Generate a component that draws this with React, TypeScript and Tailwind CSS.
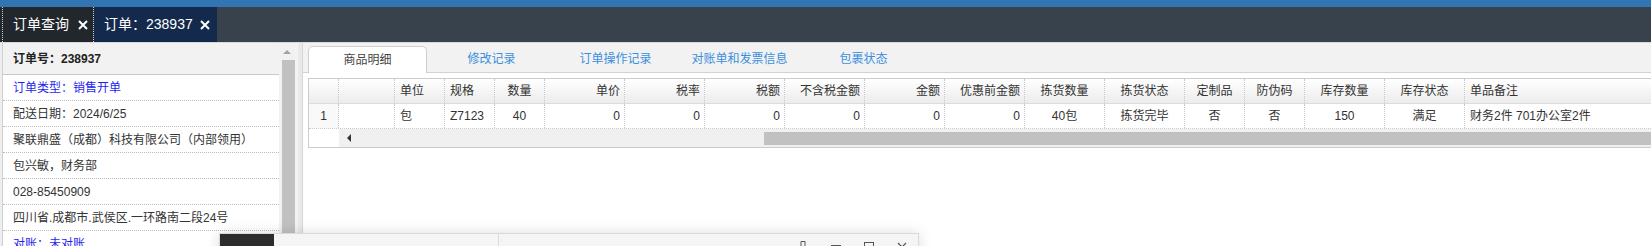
import React from "react";

const topTabs = [
  { label: "订单查询", w: "w-[92px]", bg: "bg-[#22272d]", gap: "gap-[9px]", dotted: true },
  { label: "订单：238937", w: "w-[123px]", bg: "bg-[#132a4c]", gap: "gap-[7px]", dotted: false },
];

const infoRows = [
  { text: "订单类型：销售开单", blue: true },
  { text: "配送日期：2024/6/25" },
  { text: "聚联鼎盛（成都）科技有限公司（内部领用）" },
  { text: "包兴敏，财务部" },
  { text: "028-85450909" },
  { text: "四川省.成都市.武侯区.一环路南二段24号" },
  { text: "对账：未对账", blue: true },
];

const subTabs = ["商品明细", "修改记录", "订单操作记录", "对账单和发票信息", "包裹状态"];

const L = "justify-start pl-[5px]";
const R = "justify-end pr-[4px]";
const C = "justify-center";

const columns = [
  { label: "", w: "w-[56px]", align: L, value: "" },
  { label: "单位", w: "w-[50px]", align: L, value: "包" },
  { label: "规格", w: "w-[50px]", align: L, value: "Z7123" },
  { label: "数量", w: "w-[50px]", align: C, value: "40" },
  { label: "单价", w: "w-[80px]", align: R, value: "0" },
  { label: "税率", w: "w-[80px]", align: R, value: "0" },
  { label: "税额", w: "w-[80px]", align: R, value: "0" },
  { label: "不含税金额", w: "w-[80px]", align: R, value: "0" },
  { label: "金额", w: "w-[80px]", align: R, value: "0" },
  { label: "优惠前金额", w: "w-[80px]", align: R, value: "0" },
  { label: "拣货数量", w: "w-[80px]", align: C, value: "40包" },
  { label: "拣货状态", w: "w-[80px]", align: C, value: "拣货完毕" },
  { label: "定制品", w: "w-[60px]", align: C, value: "否" },
  { label: "防伪码", w: "w-[60px]", align: C, value: "否" },
  { label: "库存数量", w: "w-[80px]", align: C, value: "150" },
  { label: "库存状态", w: "w-[80px]", align: C, value: "满足" },
  { label: "单品备注", w: "w-[300px]", align: L, value: "财务2件 701办公室2件" },
];

function CloseX() {
  return (
    <svg width="10" height="10" viewBox="0 0 10 10" className="shrink-0">
      <path d="M1 1L9 9M9 1L1 9" stroke="#ffffff" strokeWidth="2" />
    </svg>
  );
}

function TopTabs() {
  return (
    <div className="flex h-[35px] bg-[#37424c]">
      <div className="w-[2px] bg-[#22272d]" />
      {topTabs.map((t) => (
        <div
          key={t.label}
          className={`flex items-center ${t.gap} ${t.w} ${t.bg} pl-[10px] text-[14px] text-white ${
            t.dotted ? "border-x border-dotted border-white/80" : ""
          }`}
        >
          <span className="whitespace-nowrap">{t.label}</span>
          <CloseX />
        </div>
      ))}
    </div>
  );
}

function LeftPanel() {
  return (
    <div className="w-[277px] h-full border-l border-[#d0d0d0] bg-white overflow-hidden">
      <div className="h-[32px] flex items-center pl-[10px] bg-[#f2f2f2] border-b border-[#c9c9c9] font-bold text-[#222]">
        订单号：238937
      </div>
      {infoRows.map((r) => (
        <div
          key={r.text}
          className={`h-[26px] flex items-center pl-[10px] border-b border-dotted border-[#bdbdbd] whitespace-nowrap ${
            r.blue ? "text-[#1f1fef]" : "text-[#333]"
          }`}
        >
          {r.text}
        </div>
      ))}
    </div>
  );
}

function LeftScroll() {
  return (
    <div className="w-[16px] h-full bg-[#f1f1f1] flex flex-col items-center">
      <div className="h-[17px] flex items-center justify-center">
        <div className="w-0 h-0 border-x-[4px] border-x-transparent border-b-[4px] border-b-[#a3a3a3]" />
      </div>
      <div className="ml-[2px] w-[13px] flex-1 bg-[#c1c1c1]" />
    </div>
  );
}

function Grid() {
  return (
    <div className="ml-[5px] mt-[5px] w-max border border-[#cccccc] border-r-0">
      <div className="flex h-[25px] border-b border-[#dddddd] bg-linear-to-b from-[#ffffff] to-[#ececec] text-[#333]">
        <div className="w-[30px] border-r border-dotted border-[#c8c8c8]" />
        {columns.map((c, i) => (
          <div
            key={i}
            className={`flex items-center ${c.w} ${c.align} border-r border-dotted border-[#c8c8c8] whitespace-nowrap`}
          >
            {c.label}
          </div>
        ))}
      </div>
      <div className="flex h-[25px] border-b border-dotted border-[#c8c8c8] text-[#333]">
        <div className="w-[30px] flex items-center justify-center border-r border-dotted border-[#c8c8c8] bg-[#f9f9f9]">
          1
        </div>
        {columns.map((c, i) => (
          <div
            key={i}
            className={`flex items-center ${c.w} ${c.align} border-r border-dotted border-[#c8c8c8] whitespace-nowrap`}
          >
            {c.value}
          </div>
        ))}
      </div>
      <div className="flex h-[18px]">
        <div className="w-[30px] bg-white" />
        <div className="flex-1 flex items-center bg-[#f0f0f0]">
          <div className="ml-[8px] w-0 h-0 border-y-[4px] border-y-transparent border-r-[4px] border-r-[#333]" />
          <div className="ml-[413px] flex-1 h-[13px] bg-[#c1c1c1]" />
        </div>
      </div>
    </div>
  );
}

function RightPanel() {
  return (
    <div className="flex-1 h-full border-l border-[#d6d6d6] overflow-hidden bg-white">
      <div className="h-[30px] flex items-end gap-[5px] pl-[5px] bg-[#f2f2f2] border-b border-[#d2d2d2]">
        {subTabs.map((t, i) => (
          <div
            key={t}
            className={`w-[119px] h-[26px] flex items-center justify-center whitespace-nowrap ${
              i === 0
                ? "bg-white border border-b-0 border-[#cfcfcf] rounded-t-[5px] text-[#444] -mb-px h-[27px]"
                : "text-[#3a8fdc]"
            }`}
          >
            {t}
          </div>
        ))}
      </div>
      <Grid />
    </div>
  );
}

function FloatWindow() {
  return (
    <div className="absolute left-[219px] top-[233px] w-[700px] h-[40px] flex bg-[#f5f5f5] border border-[#dadada] shadow-[0_0_14px_rgba(0,0,0,0.14)]">
      <div className="w-[54px] h-full bg-[#2c2c2c]" />
      <div className="w-[225px] h-full border-r border-[#dcdcdc]" />
      <div className="flex-1 flex justify-end">
        <div className="w-[33px] flex justify-center pt-[6px]">
          <svg width="10" height="14" viewBox="0 0 10 14">
            <path d="M3 1.5H7V6L8.5 8H1.5L3 6Z" fill="none" stroke="#555" strokeWidth="1" />
            <path d="M5 8V13" stroke="#555" strokeWidth="1" />
          </svg>
        </div>
        <div className="w-[33px] flex justify-center pt-[11px]">
          <div className="w-[10px] h-[2px] bg-[#555]" />
        </div>
        <div className="w-[33px] flex justify-center pt-[8px]">
          <div className="w-[10px] h-[10px] border border-[#555]" />
        </div>
        <div className="w-[33px] flex justify-center pt-[8px]">
          <svg width="10" height="10" viewBox="0 0 10 10">
            <path d="M1 1L9 9M9 1L1 9" stroke="#555" strokeWidth="1.2" />
          </svg>
        </div>
      </div>
    </div>
  );
}

export default function App() {
  return (
    <div className="relative w-[1651px] h-[246px] overflow-hidden bg-white text-[12px] text-[#333] font-['Liberation_Sans','Noto_Sans_CJK_SC',sans-serif]">
      <div className="h-[7px] bg-[#3176b2]" />
      <TopTabs />
      <div className="flex h-[204px] border-t border-[#dadada]">
        <div className="w-[2px] bg-[#eeeeee]" />
        <LeftPanel />
        <LeftScroll />
        <div className="w-[7px] h-full bg-[#e9e9e9] border-l-[3px] border-[#f3f3f3]" />
        <RightPanel />
      </div>
      <FloatWindow />
    </div>
  );
}
